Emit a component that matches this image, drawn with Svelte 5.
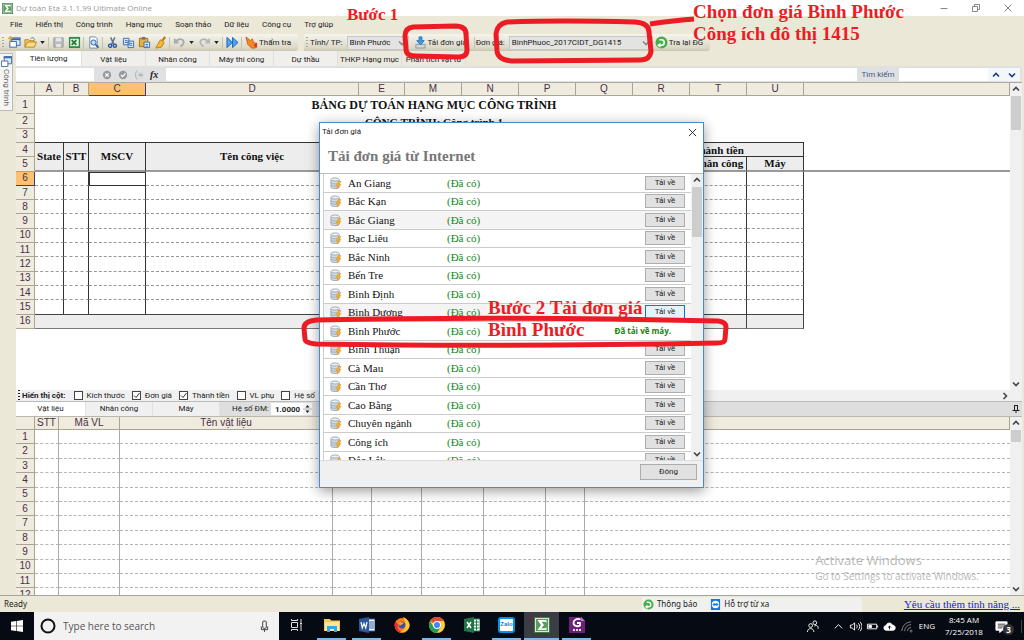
<script lang="ts">
  const menus = ['File', 'Hiển thị', 'Công trình', 'Hạng mục', 'Soạn thảo', 'Dữ liệu', 'Công cụ', 'Trợ giúp'];
  const sheetTabs = ['Tiên lượng', 'Vật liệu', 'Nhân công', 'Máy thi công', 'Dự thầu', 'THKP Hạng mục', 'Phân tích vật tư'];
  const resourceTabs = ['Vật liệu', 'Nhân công', 'Máy'];

  const columns = [
    { name: 'A', width: 29 },
    { name: 'B', width: 25 },
    { name: 'C', width: 57 },
    { name: 'D', width: 213 },
    { name: 'E', width: 46 },
    { name: 'M', width: 57 },
    { name: 'N', width: 57 },
    { name: 'P', width: 57 },
    { name: 'Q', width: 57 },
    { name: 'R', width: 57 },
    { name: 'T', width: 57 },
    { name: 'U', width: 57 }
  ];

  const resourceColumns = [
    { name: 'STT', width: 24 },
    { name: 'Mã VL', width: 61 },
    { name: 'Tên vật liệu', width: 213 },
    { name: '', width: 39 },
    { name: '', width: 50 },
    { name: '', width: 62 },
    { name: '', width: 62 },
    { name: '', width: 39 }
  ];

  const bodyRows = [6, 7, 8, 9, 10, 11, 12, 13, 14, 15];
  const resourceRows = Array.from({ length: 12 }, (_, i) => i + 1);

  const provinces = [
    'An Giang', 'Bắc Kạn', 'Bắc Giang', 'Bạc Liêu', 'Bắc Ninh', 'Bến Tre', 'Bình Định', 'Bình Dương',
    'Bình Phước', 'Bình Thuận', 'Cà Mau', 'Cần Thơ', 'Cao Bằng', 'Chuyên ngành', 'Công ích', 'Đắc Lắk'
  ];
  const downloaded = 'Bình Phước';
  const focused = 'Bình Dương';
  const shaded = ['Bắc Giang', 'Bình Dương'];

  let shownColumns = $state([
    { label: 'Kích thước', checked: false },
    { label: 'Đơn giá', checked: true },
    { label: 'Thành tiền', checked: true },
    { label: 'VL phụ', checked: false },
    { label: 'Hệ số', checked: false }
  ]);
  let factor = $state('1.0000');
  let activeTab = $state('Tiên lượng');
  let activeResource = $state('Vật liệu');
</script>

{#snippet sigma()}
  <svg viewBox="0 0 16 16" aria-hidden="true">
    <rect width="16" height="16" fill="#3c7d45" />
    <rect x="1.5" y="1.5" width="13" height="13" fill="#5b9a60" stroke="#dcebd9" />
    <path d="M3.5 3h9v3l-1-1.200H7.500L10 8l-2.800 3.200H11.500l1-1.200v3h-9l3.500-5z" fill="#fff" />
  </svg>
{/snippet}

{#snippet chevron(dir)}
  <svg class="chevron {dir}" viewBox="0 0 8 8" aria-hidden="true">
    <path d="M1 2.500 4 5.500 7 2.500" fill="none" stroke="currentColor" stroke-width="1.600" />
  </svg>
{/snippet}

{#snippet caret()}
  <svg class="caret" viewBox="0 0 6 4" aria-hidden="true"><path d="M0 0h6L3 4z" fill="#222" /></svg>
{/snippet}

{#snippet goIcon()}
  <svg viewBox="0 0 12 12" aria-hidden="true">
    <circle cx="6" cy="6" r="5.500" fill="#43b049" />
    <path d="M4 3.500h2a2.500 2.500 0 0 1 0 5H3.500" fill="none" stroke="#fff" stroke-width="1.500" />
    <path d="M5 6.200v4.600L2 8.500z" fill="#fff" />
  </svg>
{/snippet}

<div class="desktop">
  <header class="titlebar">
    <span class="app-icon">{@render sigma()}</span>
    <span class="title">Dự toán Eta 3.1.1.99 Ultimate Online</span>
    <div class="window-buttons">
      <button aria-label="Minimize"><svg viewBox="0 0 10 10"><path d="M1.500 5.500h7" /></svg></button>
      <button aria-label="Restore"><svg viewBox="0 0 10 10"><path d="M1.500 3.500h5v5h-5zM3.500 3.500v-2h5v5h-2" /></svg></button>
      <button aria-label="Close"><svg viewBox="0 0 10 10"><path d="m1.500 1.500 7 7m0-7-7 7" /></svg></button>
    </div>
  </header>

  <nav class="menubar">
    {#each menus as menu (menu)}
      <button>{menu}</button>
    {/each}
  </nav>

  <div class="toolbars">
    <div class="toolbar">
      <span class="grip"></span>
      <button class="tool" aria-label="New">
        <svg viewBox="0 0 14 14"><rect x="4" y="2" width="9" height="8" fill="#dcebfa" stroke="#3567a8" /><path d="M4 3.500h9" stroke="#3567a8" stroke-width="2" /><rect x="2" y="6" width="7" height="6" fill="#fff" stroke="#3567a8" /><path d="M2.500 0v6M0 2.500h5" stroke="#f0a020" stroke-width="1.500" /></svg>
      </button>
      <button class="tool" aria-label="Open">
        <svg viewBox="0 0 14 14"><path d="M1 12V4h4l1 1h5v2" fill="#f4c55c" stroke="#b98320" /><path d="m1 12 3-5.500h9.500L11 12z" fill="#ffe08a" stroke="#b98320" /><path d="M7 3c2-2 4-1 4.500 1" fill="none" stroke="#4876b5" /></svg>
      </button>
      {@render caret()}
      <span class="sep"></span>
      <button class="tool" aria-label="Save" disabled>
        <svg viewBox="0 0 14 14"><path d="M2 2h10v10H2z" fill="#bbb" stroke="#999" /><path d="M4 2h6v4H4zM4.500 8.500h5V12h-5z" fill="#e5e5e5" /></svg>
      </button>
      <button class="tool" aria-label="Excel">
        <svg viewBox="0 0 14 14"><rect x="1" y="1" width="12" height="12" fill="#2f8a46" /><rect x="2.500" y="3" width="9" height="8" fill="#e8f5e8" /><path d="m4 4.500 5 5m0-5-5 5" stroke="#23793a" stroke-width="2" /></svg>
      </button>
      <span class="sep"></span>
      <button class="tool" aria-label="Preview">
        <svg viewBox="0 0 14 14"><path d="M3 1h6l2 2v10H3z" fill="#fff" stroke="#6886b4" /><circle cx="7" cy="7" r="2.800" fill="#b9dcf5" stroke="#345f93" /><path d="m9 9 3.500 3.500" stroke="#345f93" stroke-width="1.600" /></svg>
      </button>
      <span class="sep"></span>
      <button class="tool" aria-label="Cut">
        <svg viewBox="0 0 14 14"><path d="M5 1.500 8.500 9M9.500 1.500 6 9" stroke="#5a7094" stroke-width="1.500" /><circle cx="4.500" cy="10.500" r="1.700" fill="none" stroke="#1e50a8" stroke-width="1.500" /><circle cx="9.500" cy="10.500" r="1.700" fill="none" stroke="#1e50a8" stroke-width="1.500" /></svg>
      </button>
      <button class="tool" aria-label="Copy">
        <svg viewBox="0 0 14 14"><path d="M1.500 2.500h6v7h-6zM6.500 5.500h6v7h-6z" fill="#d9e8fb" stroke="#3769b3" /><path d="M3 5h3M3 7h3M8 8h3M8 10h3" stroke="#3769b3" /></svg>
      </button>
      <button class="tool" aria-label="Paste">
        <svg viewBox="0 0 14 14"><path d="M1.500 2.500h9v9h-9z" fill="#e8b13c" stroke="#9b6f18" /><path d="M4 1h4v3H4z" fill="#777" /><path d="M6.500 6.500h6v6h-6z" fill="#e3eefb" stroke="#3769b3" /><path d="M8 9h3M8 11h3" stroke="#3769b3" /></svg>
      </button>
      <button class="tool" aria-label="Format painter">
        <svg viewBox="0 0 14 14"><path d="m12 1-3 4" stroke="#bd7b1b" stroke-width="2.500" /><path d="m7 4 4 3-3 5-6 1 2-4z" fill="#f7b733" stroke="#bd7b1b" /></svg>
      </button>
      <span class="sep"></span>
      <button class="tool" aria-label="Undo" disabled>
        <svg viewBox="0 0 14 14"><path d="M2 3v4h4M2.500 6.500C5 3 9 2.500 11 5s-1 5-3 6.500" fill="none" stroke="#aaa" stroke-width="2" /></svg>
      </button>
      {@render caret()}
      <button class="tool" aria-label="Redo" disabled>
        <svg viewBox="0 0 14 14"><path d="M12 3v4H8M11.500 6.500C9 3 5 2.500 3 5s1 5 3 6.500" fill="none" stroke="#b5b5b5" stroke-width="2" /></svg>
      </button>
      {@render caret()}
      <span class="sep"></span>
      <button class="tool" aria-label="Run">
        <svg viewBox="0 0 14 14"><path d="m1 1.500 6 5.500-6 5.500zM7 1.500 13 7l-6 5.500z" fill="#4aa3ee" stroke="#1e63bd" /></svg>
      </button>
      <span class="sep"></span>
      <button class="labelled">
        <svg viewBox="0 0 14 14"><path d="m1 1 5 4 2-2 1 4 3 1-1 5H7l-4-4z" fill="#f08a24" stroke="#d4551c" /><path d="m9 10 4-3v6z" fill="#d33" /></svg>
        Thẩm tra
      </button>
    </div>

    <div class="toolbar">
      <span class="grip"></span>
      <label for="province">Tỉnh/ TP:</label>
      <span class="dropdown">
        <select id="province" class="province"><option>Bình Phước</option></select>
        {@render chevron('down')}
      </span>
      <button class="labelled download">
        <svg viewBox="0 0 14 14"><path d="M2 9h10v4H2z" fill="#cfd5da" stroke="#8c969e" /><path d="M5.500 1h3v4H11L7 9.500 3 5h2.500z" fill="#3f9be4" stroke="#2472b8" /></svg>
        Tải đơn giá
      </button>
      <span class="sep"></span>
      <label for="price">Đơn giá:</label>
      <span class="dropdown">
        <select id="price" class="price"><option>BinhPhuoc_2017CIDT_DG1415</option></select>
        {@render chevron('down')}
      </span>
      <button class="labelled">{@render goIcon()} Tra lại ĐG</button>
    </div>
  </div>

  <div class="workspace">
    <aside>
      <button class="side-tab">
        <svg viewBox="0 0 12 12"><path d="M3.500.500h8v8h-8z" fill="#dbe9fa" stroke="#416da8" /><path d="M3 1.500h9" stroke="#416da8" stroke-width="2" /><path d="M.500 5.500h7v6h-7z" fill="#fff" stroke="#416da8" /></svg>
        <span>Công trình</span>
      </button>
    </aside>

    <main>
      <div class="tabs">
        {#each sheetTabs as tab (tab)}
          <button class:active={tab === activeTab} onclick={() => (activeTab = tab)}>{tab}</button>
        {/each}
      </div>

      <div class="formula-bar">
        <input class="cell-name" aria-label="Ô" />
        <div class="formula-tools">
          <svg viewBox="0 0 12 12"><circle cx="6" cy="6" r="5" fill="#999" /><path d="m4 4 4 4m0-4-4 4" stroke="#fff" stroke-width="1.500" /></svg>
          <svg viewBox="0 0 12 12"><circle cx="6" cy="6" r="5" fill="#999" /><path d="m3.500 6 2 2 3.500-4" fill="none" stroke="#fff" stroke-width="1.500" /></svg>
          <svg viewBox="0 0 12 12"><path d="M4 .500a8 8 0 0 0 0 11" fill="none" stroke="#aaa" /><circle cx="8" cy="6" r="3.500" fill="#d5d5d5" /><path d="M6 6h4" stroke="#888" /></svg>
          <i>fx</i>
        </div>
        <input class="formula" aria-label="Công thức" />
        <label for="find">Tìm kiếm</label>
        <input id="find" class="find" />
        <button aria-label="Tìm trước">{@render chevron('up')}</button>
        <button aria-label="Tìm sau">{@render chevron('down')}</button>
      </div>

      <section class="pane upper">
        <div class="sheet">
          <table class="estimate">
            <colgroup>
              <col class="gutter" />
              {#each columns as column (column.name)}
                <col style="width: {column.width}px" />
              {/each}
              <col />
            </colgroup>
            <thead>
              <tr>
                <th></th>
                {#each columns as column (column.name)}
                  <th class:selected={column.name === 'C'}>{column.name}</th>
                {/each}
                <th></th>
              </tr>
            </thead>
            <tbody>
              <tr class="first">
                <th>1</th>
                <td></td>
                <td class="heading" colspan="11">BẢNG DỰ TOÁN HẠNG MỤC CÔNG TRÌNH</td>
                <td></td>
              </tr>
              <tr>
                <th>2</th>
                <td></td>
                <td colspan="11">CÔNG TRÌNH: Công trình 1</td>
                <td></td>
              </tr>
              <tr class="above-head"><th>3</th><td colspan="12"></td><td class="filler"></td></tr>
              <tr class="head">
                <th>4</th>
                <td class="frozen" rowspan="2">State</td>
                <td class="frozen" rowspan="2">STT</td>
                <td class="frozen" rowspan="2">MSCV</td>
                <td class="frozen" rowspan="2">Tên công việc</td>
                <td class="frozen" rowspan="2"></td>
                <td class="frozen" rowspan="2"></td>
                <td colspan="3"></td>
                <td colspan="3">Thành tiền</td>
                <td class="filler"></td>
              </tr>
              <tr class="head">
                <th>5</th>
                {#each ['', '', '', '', 'Nhân công', 'Máy'] as name}
                  <td class="frozen">{name}</td>
                {/each}
                <td class="filler frozen"></td>
              </tr>
              {#each bodyRows as row (row)}
                <tr class="line" class:last={row === 15}>
                  <th class:selected={row === 6}>{row}</th>
                  {#each columns as column (column.name)}
                    <td class:cursor={row === 6 && column.name === 'C'}></td>
                  {/each}
                  <td class="filler"></td>
                </tr>
              {/each}
              <tr class="total">
                <th>16</th>
                <td colspan="10"></td>
                <td></td>
                <td></td>
                <td class="filler"></td>
              </tr>
            </tbody>
          </table>
        </div>
        <div class="scrollbar tall">
          {@render chevron('up')}
          <span class="thumb"></span>
          {@render chevron('down')}
        </div>
      </section>

      <div class="column-options">
        <span class="grip dark"></span>
        <b>Hiển thị cột:</b>
        {#each shownColumns as option (option.label)}
          <label>
            <span class="tick">
              <input type="checkbox" bind:checked={option.checked} />
              {#if option.checked}
                <svg viewBox="0 0 9 9" aria-hidden="true"><path d="m2 4.500 2 2 3.500-4.500" fill="none" stroke="#333" /></svg>
              {/if}
            </span>
            {option.label}
          </label>
        {/each}
        <span class="scroll-right">{@render chevron('right')}</span>
      </div>

      <div class="resource-bar">
        {#each resourceTabs as tab (tab)}
          <button class:active={tab === activeResource} onclick={() => (activeResource = tab)}>{tab}</button>
        {/each}
        <label for="factor">Hệ số ĐM:</label>
        <input id="factor" bind:value={factor} />
        <span class="spinner">
          <svg viewBox="0 0 9 12" aria-hidden="true"><path d="M2.500 4.500h4l-2-2.500zM2.500 7.500h4l-2 2.500z" fill="#222" /><path d="M0 6h9" stroke="#bbb" /></svg>
        </span>
        <svg class="pin" viewBox="0 0 8 8" aria-hidden="true"><path d="M2.500 0v5M5.500 0v5M2 .500h4M.500 5.500h7M4 5v3" fill="none" stroke="#222" /></svg>
      </div>

      <section class="pane lower">
        <div class="sheet">
          <table class="resources">
            <colgroup>
              <col class="gutter" />
              {#each resourceColumns as column}
                <col style="width: {column.width}px" />
              {/each}
              <col />
            </colgroup>
            <thead>
              <tr>
                <th></th>
                {#each resourceColumns as column, i}
                  <th class:blank={i > 2}>{column.name}</th>
                {/each}
                <th></th>
              </tr>
            </thead>
            <tbody>
              {#each resourceRows as row (row)}
                <tr>
                  <th>{row}</th>
                  {#each resourceColumns as _}
                    <td></td>
                  {/each}
                  <td class="filler"></td>
                </tr>
              {/each}
            </tbody>
          </table>
        </div>
        <div class="scrollbar short">
          {@render chevron('up')}
          <span class="thumb"></span>
          {@render chevron('down')}
        </div>
        <div class="watermark">
          <p>Activate Windows</p>
          <small>Go to Settings to activate Windows.</small>
        </div>
      </section>
    </main>
  </div>

  <footer class="statusbar">
    <span class="ready">Ready</span>
    <div class="status-links">
      <button>{@render goIcon()} Thông báo</button>
      <button>
        <svg viewBox="0 0 12 12"><rect x="1" width="10" height="12" fill="#1976d8" /><circle cx="6" cy="6" r="4" fill="#fff" /><path d="m2.500 6 2.500-2v1.200h2V4l2.500 2L7 8V6.800H5V8z" fill="#1976d8" /></svg>
        Hỗ trợ từ xa
      </button>
    </div>
    <a href="#feature">Yêu cầu thêm tính năng ...</a>
  </footer>

  <div class="taskbar">
    <button class="start" aria-label="Start">
      <svg viewBox="0 0 12 12"><path d="m0 1.800 5-.700v4.600H0zM5.600 1 12 0v5.700H5.600zM0 6.300h5v4.600l-5-.700zM5.600 6.300H12V12l-6.400-1z" fill="#fff" /></svg>
    </button>
    <div class="search">
      <svg class="cortana" viewBox="0 0 16 16"><circle cx="8" cy="8" r="6.500" fill="none" stroke="#111" stroke-width="2" /></svg>
      <input placeholder="Type here to search" aria-label="Type here to search" />
      <svg class="mic" viewBox="0 0 10 14"><rect x="3" y="1" width="4" height="8" rx="1" fill="none" stroke="#333" /><path d="M1.500 7v3.500h7V7M5 10.500V13" fill="none" stroke="#333" /></svg>
    </div>
    <button class="app" aria-label="Task view">
      <svg viewBox="0 0 16 16"><path d="M2.500 5.500h6v5h-6zM2.500 3.500V2M8.500 3.500V2M2.500 3.500h6M2.500 12.500h6M2.500 12.500V14M8.500 12.500V14M12 2v3M12 8v6" fill="none" stroke="#ddd" /><path d="M11 5.500h2v2h-2z" fill="#ddd" /></svg>
    </button>
    <button class="app running" aria-label="Explorer">
      <svg viewBox="0 0 16 16"><path d="M0 2h6l1 1.500h9V14H0z" fill="#f5c85a" /><path d="M1 5h14v9H1z" fill="#ffe49a" /><path d="M3 15V9h10v6h-3v-3H6v3z" fill="#38a6e0" /></svg>
    </button>
    <button class="app running" aria-label="Word">
      <svg viewBox="0 0 16 16"><path d="M8 2h8v12H8z" fill="#fff" stroke="#2b579a" /><path d="M10 5h5M10 7h5M10 9h5M10 11h5" stroke="#2b579a" /><path d="m0 2 10-2v16L0 14z" fill="#2b579a" /><path d="m2 5 1.300 6L5 6.500 6.700 11 8 5" fill="none" stroke="#fff" stroke-width="1.200" /></svg>
    </button>
    <button class="app" aria-label="Firefox">
      <svg viewBox="0 0 16 16"><circle cx="8" cy="8.500" r="7.500" fill="#ff7a18" /><path d="M9 0c5 2 7 6 6.500 9-1 5-6 7-10 6C12 14 13 7 9 0z" fill="#ffc928" /><path d="M1 5c-1 6 2 10.500 7 10.500C4 13 3 10 4 7z" fill="#e8263c" /><circle cx="8" cy="8" r="3.400" fill="#3c4bb8" /><path d="M4 6c3-2 4 0 6-.500C9 8 7 7 6 9z" fill="#ff9a20" /></svg>
    </button>
    <button class="app running" aria-label="Chrome">
      <svg viewBox="0 0 16 16"><circle cx="8" cy="8" r="8" fill="#ffcd40" /><path d="M8 8 1.100 4A8 8 0 0 1 15 4H8z" fill="#e04a3a" /><path d="M1.100 4A8 8 0 0 0 8 16l3.500-6L8 8 4.500 10z" fill="#1fa05a" /><circle cx="8" cy="8" r="3.900" fill="#fff" /><circle cx="8" cy="8" r="3" fill="#4285f4" /></svg>
    </button>
    <button class="app" aria-label="Excel">
      <svg viewBox="0 0 16 16"><path d="M8 2h8v12H8z" fill="#fff" stroke="#217346" /><path d="M10 5h5M10 8h5M10 11h5M12.500 3v10" stroke="#217346" /><path d="m0 2 10-2v16L0 14z" fill="#217346" /><path d="m3 5 4 6m0-6-4 6" stroke="#fff" stroke-width="1.500" /></svg>
    </button>
    <button class="app running" aria-label="Zalo">
      <span class="zalo">Zalo</span>
    </button>
    <button class="app running current" aria-label="Eta">{@render sigma()}</button>
    <button class="app running" aria-label="Foxit PDF">
      <svg viewBox="0 0 16 16"><path d="M0 0h12l4 4v12H0z" fill="#6d2077" /><path d="M12 0v4h4z" fill="#b77fc0" /><path d="M11.500 2.500C8 1 4.500 3 4.500 6s4 4 6.500 2.500V6H8" fill="none" stroke="#fff" stroke-width="1.800" /><path d="M4 13h2M7 13h2M10 13h2" stroke="#ddd" stroke-width="2" /></svg>
    </button>

    <div class="tray">
      <svg viewBox="0 0 14 14"><circle cx="5" cy="6" r="2" /><path d="M1.500 13c0-5 7-5 7 0" /><circle cx="9.500" cy="3" r="2" /><path d="M9 6.500c2.500-1.500 4.500 0 4 3" /></svg>
      <svg viewBox="0 0 14 14"><path d="m3 9 4-4 4 4" /></svg>
      <svg viewBox="0 0 14 14"><path d="M1.500 5.500h2l2.500-2.500v8L3.500 8.500h-2zM8 5c1 1 1 3 0 4M10 3.500c2 2 2 5 0 7M12 2c2.500 3 2.500 7 0 10" /></svg>
      <svg viewBox="0 0 14 14"><path d="M1.500 4.500h10v5h-10zM12.500 6v2" /><path d="M3 6h3v2H3z" fill="#fff" /></svg>
      <svg viewBox="0 0 14 14"><path d="M3.500 11a2.500 2.500 0 0 1 0-5c.500-3.500 5.500-3.500 6.500-.500 4 0 4 5.500 1 5.500z" fill="#fff" /><path d="M7 10V6.500M5.500 8 7 6.500 8.500 8" stroke="#090d14" /></svg>
      <svg viewBox="0 0 14 14" class="dim"><path d="M2 12A10 10 0 0 1 12 2M5 12a7 7 0 0 1 7-7M8 12a4 4 0 0 1 4-4" /><circle cx="12" cy="12" r="1" /></svg>
      <span class="lang">ENG</span>
      <time><span>8:45 AM</span><span>7/25/2018</span></time>
      <div class="notifications">
        <svg viewBox="0 0 14 14"><path d="M1 2h12v9H8l-3 2.500V11H1z" fill="#fff" /><path d="M3 4.500h8M3 6.500h8M3 8.500h5" stroke="#333" /></svg>
        <b>3</b>
      </div>
    </div>
  </div>

  <div class="dialog" role="dialog" aria-labelledby="dialog-title">
    <div class="dialog-title">
      <span id="dialog-title">Tải đơn giá</span>
      <button aria-label="Đóng cửa sổ"><svg viewBox="0 0 10 10"><path d="m1 1 8 8m0-8-8 8" stroke="#222" /></svg></button>
    </div>
    <h2>Tải đơn giá từ Internet</h2>
    <div class="dialog-body">
      <ul>
        {#each provinces as province (province)}
          <li class:shaded={shaded.includes(province)}>
            <svg viewBox="0 0 13 13" aria-hidden="true">
              <path d="M1 3v8c0 2 9 2 9 0V3z" fill="#d3dae0" stroke="#9aa7b3" />
              <path d="M1 6c0 2 9 2 9 0M1 8.500c0 2 9 2 9 0" fill="none" stroke="#9aa7b3" />
              <ellipse cx="5.500" cy="2.700" rx="4.500" ry="1.700" fill="#eef2f5" stroke="#9aa7b3" />
              <path d="M9 5 6.500 9.500h2L7.500 13l4.500-5h-2.200L12 5z" fill="#f8b230" stroke="#d88e1b" stroke-width=".500" />
            </svg>
            <span class="name">{province}</span>
            <span class="have">(Đã có)</span>
            {#if province === downloaded}
              <strong>Đã tải về máy.</strong>
            {:else}
              <button class:focused={province === focused}>Tải về</button>
            {/if}
          </li>
        {/each}
      </ul>
      <div class="scrollbar list">
        {@render chevron('up')}
        <span class="thumb"></span>
        {@render chevron('down')}
      </div>
    </div>
    <div class="dialog-footer"><button>Đóng</button></div>
  </div>

  <svg class="marks" width="1024" height="640" aria-hidden="true">
    <path d="M413 27 455 26Q466 26 466 34L467 50Q467 57 458 57L416 56Q406 56 406 49L405 36Q405 28 413 27z" />
    <path d="M507 22Q560 20 635 22Q649 23 649 32L651 51Q650 60 640 60L512 61Q498 60 497 51L496 34Q497 24 507 22z" />
    <path d="M650 24Q670 21 694 19" />
    <path d="M317 320Q500 316 718 321Q726 322 726 327L725 339Q725 343 717 343Q500 347 316 344Q305 343 305 339L304 328Q304 321 317 320z" />
  </svg>
  <p class="note step-one">Bước 1</p>
  <p class="note choose">Chọn đơn giá Bình Phước<br />Công ích đô thị 1415</p>
  <p class="note step-two">Bước 2 Tải đơn giá<br />Bình Phước</p>
</div>

<style>
  :global(body) { margin: 0; }

  .desktop {
    position: relative;
    display: flex;
    flex-direction: column;
    height: 100vh;
    overflow: hidden;
    background: #ebe8d8;
    color: #222;
    font: 8px/10px Roboto, Arial, sans-serif;
  }

  button, input, select {
    margin: 0;
    padding: 0;
    border: 0;
    border-radius: 0;
    background: none;
    color: inherit;
    font: inherit;
    box-sizing: border-box;
  }
  button { white-space: nowrap; }
  input { min-width: 0; background: #fff; outline: none; }
  label { white-space: nowrap; }
  svg { display: block; flex: none; }

  .chevron { width: 8px; height: 8px; color: #444; }
  .chevron.up { transform: rotate(180deg); }
  .chevron.right { transform: rotate(-90deg); }
  .caret { width: 5px; height: 3px; margin: 0 2px; }

  /* Window chrome */
  .titlebar {
    flex: none;
    display: flex;
    align-items: center;
    height: 16px;
    padding-left: 2px;
    background: #fff;
  }
  .app-icon svg { width: 11px; height: 11px; }
  .title {
    flex: 1;
    margin-left: 3px;
    color: #999;
    font: 8px/12px "Open Sans", sans-serif;
  }
  .window-buttons { display: flex; }
  .window-buttons button { width: 32px; display: flex; justify-content: center; }
  .window-buttons svg { width: 10px; height: 10px; fill: none; stroke: #888; }

  .menubar {
    flex: none;
    display: flex;
    gap: 13px;
    height: 18px;
    padding-left: 10px;
  }

  .toolbars {
    flex: none;
    display: flex;
    gap: 6px;
    height: 17px;
  }
  .toolbar {
    display: flex;
    align-items: center;
    padding-right: 5px;
    border-radius: 0 3px 3px 0;
    background: linear-gradient(#f6f5ee, #dcd9c8 80%, #c9c6b2);
  }
  .grip {
    width: 2px;
    height: 11px;
    margin: 0 2px;
    background: repeating-linear-gradient(#aaa79a 0 1px, transparent 1px 3px);
  }
  .grip.dark { background: repeating-linear-gradient(#223 0 1px, transparent 1px 3px); }
  .sep { width: 1px; height: 12px; margin: 0 1px; background: #c5c2b2; }
  .tool { width: 16px; display: flex; justify-content: center; }
  .tool svg, .labelled svg { width: 13px; height: 13px; }
  .labelled { display: flex; align-items: center; gap: 1px; padding: 0 2px; }
  .labelled.download { padding: 0 6px 0 5px; }

  .dropdown { position: relative; display: flex; margin-left: 4px; }
  .dropdown .chevron { position: absolute; right: 3px; top: 3px; color: #888; pointer-events: none; }
  select {
    height: 14px;
    padding-left: 2px;
    border: 1px solid #c8c8c4;
    background: #e3e3e1;
    appearance: none;
  }
  .province { width: 62px; }
  .price { width: 144px; }

  .workspace { flex: 1; display: flex; min-height: 0; }
  aside { flex: none; width: 16px; }
  .side-tab {
    display: flex;
    flex-direction: column;
    align-items: center;
    gap: 2px;
    width: 13px;
    margin-top: 2px;
    padding: 2px 0 4px;
    border: 1px solid #b8bcc2;
    border-left: 0;
    background: #f5f5f3;
    color: #666;
  }
  .side-tab svg { width: 11px; height: 11px; }
  .side-tab span { writing-mode: vertical-rl; }

  main { flex: 1; display: flex; flex-direction: column; min-width: 0; padding-right: 2px; }

  .tabs { flex: none; display: flex; height: 15px; }
  .tabs button { width: 64px; border-right: 1px solid #dfdfdb; background: #f0efec; padding-top: 2px; }
  .tabs button.active { width: 66px; background: #fff; padding: 0; }
  .tabs button:nth-last-child(-n + 2) { background: #ebe9de; }

  .formula-bar {
    flex: none;
    display: flex;
    align-items: stretch;
    height: 17px;
    box-sizing: border-box;
    padding: 2px 2px 1px 0;
    border-bottom: 1px solid #b0ada0;
    background: #dfe0e2;
  }
  .cell-name { width: 78px; }
  .formula-tools { display: flex; align-items: center; gap: 6px; width: 72px; padding-left: 8px; box-sizing: border-box; }
  .formula-tools svg { width: 10px; height: 10px; }
  .formula-tools i { color: #222; font: italic bold 10px/12px "Liberation Serif", serif; }
  .formula { flex: 1; }
  .formula-bar label { width: 42px; color: #44577c; line-height: 14px; text-align: center; }
  .find { width: 89px; }
  .formula-bar button { width: 16px; display: flex; align-items: center; justify-content: center; background: #f3f6fb; }
  .formula-bar .chevron { color: #1d3c78; }

  /* Sheets */
  .pane { position: relative; display: flex; min-height: 0; background: #fff; }
  .upper { flex: 307 1 0; }
  .lower { flex: 178 1 0; overflow: hidden; }
  .sheet { flex: 1; min-width: 0; overflow: hidden; }

  table { width: 100%; table-layout: fixed; border-collapse: separate; border-spacing: 0; }
  .estimate { height: 246px; }
  .resources { height: 186px; }
  .gutter { width: 19px; }
  th, td { padding: 0; box-sizing: border-box; overflow: hidden; white-space: nowrap; }
  th {
    border-right: 1px solid #a9a592;
    border-bottom: 1px solid #a9a592;
    background: #efebde;
    color: #483048;
    font: 10px/12px "Liberation Sans", Arial, sans-serif;
  }
  th.selected { background: #ffc070; border-color: #3a3a88; }
  thead th.blank { border-right-color: #efebde; }
  tbody tr { height: 14px; }
  tr.first { height: 18px; }
  td { color: #111; font: bold 11px/12px "Liberation Serif", "Times New Roman", serif; text-align: center; }
  .heading { font-size: 12px; }

  .above-head td:not(.filler) { border-bottom: 1px solid #333; }
  .head td:not(.filler) {
    border-right: 1px solid #333;
    border-bottom: 1px solid #333;
    background: #ededed;
  }
  .head td.frozen, .head td.filler.frozen { border-bottom: 2px solid #999; }
  .line td:not(.filler) { border-right: 1px solid #333; border-bottom: 1px dashed #999; }
  .line.last td:not(.filler) { border-bottom: 1px solid #444; }
  .line td.cursor { outline: 1px solid #333; outline-offset: -1px; }
  .total td:not(.filler) { border-right: 1px solid #444; border-bottom: 1px solid #777; background: #ededed; }
  .resources td { border-right: 1px solid #aaa; border-bottom: 1px dashed #b5b5b5; }
  .resources td.filler { border-right: 0; }

  .scrollbar {
    flex: none;
    display: flex;
    flex-direction: column;
    align-items: center;
    width: 12px;
    padding: 2px 0;
    box-sizing: border-box;
    background: #f0f0f0;
  }
  .scrollbar .thumb { width: 10px; margin: 3px 0 auto; background: #cdcdcd; }
  .tall .thumb { height: 34px; }
  .short .thumb { height: 12px; }
  .list .thumb { height: 50px; }

  .column-options {
    flex: none;
    display: flex;
    align-items: center;
    height: 12px;
    background: #f0f0f0;
    border-bottom: 1px solid #bbb;
    box-sizing: border-box;
  }
  .column-options b { margin-right: 1px; }
  .column-options label { display: flex; align-items: center; gap: 4px; margin-left: 7px; }
  .tick { position: relative; display: flex; }
  .tick input {
    width: 9px;
    height: 9px;
    border: 1px solid #444;
    background: #fff;
    appearance: none;
  }
  .tick svg { position: absolute; left: 0; top: 0; width: 9px; height: 9px; pointer-events: none; }
  .scroll-right { margin: 0 13px 0 auto; }

  .resource-bar {
    flex: none;
    display: flex;
    align-items: center;
    height: 15px;
    box-sizing: border-box;
    border-bottom: 1px solid #b8b8ac;
    background: #dedede;
  }
  .resource-bar button { width: 67px; height: 14px; border-right: 1px solid #e2e2e2; background: #f0f0f0; }
  .resource-bar button.active { width: 70px; background: #fff; }
  .resource-bar label { margin: 0 2px 0 12px; }
  .resource-bar input { width: 32px; height: 12px; padding-left: 4px; font-weight: bold; }
  .spinner svg { width: 9px; height: 12px; background: #f4f4f4; }
  .pin { width: 8px; height: 8px; margin: 0 2px 0 auto; }

  .watermark {
    position: absolute;
    right: 43px;
    bottom: 12px;
    color: #b9b9b9;
    font-family: "Open Sans", sans-serif;
  }
  .watermark p { margin: 0; font-size: 13px; line-height: 17px; }
  .watermark small { display: block; font-size: 10px; line-height: 14px; }

  .statusbar {
    flex: none;
    display: flex;
    align-items: center;
    height: 17px;
    box-sizing: border-box;
    padding: 0 4px;
    border-top: 1px solid #a5a5a0;
    font: 8px/12px "Noto Sans", sans-serif;
  }
  .ready { flex: 1; }
  .status-links { display: flex; gap: 12px; width: 220px; height: 15px; margin-right: 42px; background: #f0f0ee; }
  .status-links button { display: flex; align-items: center; gap: 3px; }
  .status-links svg { width: 11px; height: 11px; margin-left: 1px; }
  .statusbar a { color: #1a1ae6; font: 11px/12px "Liberation Serif", serif; }

  /* Taskbar */
  .taskbar {
    flex: none;
    display: flex;
    height: 28px;
    background: #060a12;
    color: #fff;
    font-family: "Open Sans", sans-serif;
  }
  .start { width: 34px; display: flex; align-items: center; justify-content: center; }
  .start svg { width: 12px; height: 12px; }
  .search { display: flex; align-items: center; width: 245px; padding: 0 10px 0 6px; box-sizing: border-box; background: #f2f2f2; }
  .cortana { width: 16px; height: 16px; }
  .search input { flex: 1; padding-left: 7px; background: none; color: #555; font-size: 10px; line-height: 14px; }
  .search input::placeholder { color: #555; opacity: 1; }
  .mic { width: 9px; height: 13px; }
  .app { width: 35px; display: flex; align-items: center; justify-content: center; border-bottom: 2px solid transparent; }
  .app svg { width: 16px; height: 16px; }
  .app.running { width: 29px; margin: 0 3px; border-color: #76b9ed; }
  .app.current { width: 35px; margin: 0; background: #3a3d44; }
  .zalo {
    width: 17px;
    height: 16px;
    border: 2px solid #0a8fe8;
    border-radius: 3px;
    box-sizing: border-box;
    background: #fff;
    color: #0a7fd8;
    font: bold 6px/11px "Liberation Sans", sans-serif;
  }

  .tray { display: flex; align-items: center; gap: 4px; margin-left: auto; padding-right: 2px; }
  .tray svg { width: 13px; height: 13px; fill: none; stroke: #fff; }
  .tray > svg:first-child { margin-right: 9px; }
  .tray svg.dim { stroke: #888; }
  .lang { margin-left: 2px; }
  .tray time { display: flex; flex-direction: column; width: 46px; margin-left: 2px; line-height: 12px; text-align: center; }
  .notifications { position: relative; width: 26px; margin-left: 4px; border-right: 1px solid #444; }
  .notifications b {
    position: absolute;
    left: 8px;
    top: 4px;
    width: 11px;
    border-radius: 50%;
    background: #333;
    line-height: 11px;
    text-align: center;
  }

  /* Download dialog */
  .dialog {
    position: absolute;
    left: 319px;
    top: 122px;
    display: flex;
    flex-direction: column;
    width: 385px;
    height: 366px;
    box-sizing: border-box;
    border: 1px solid #3f8fd0;
    background: #fff;
    box-shadow: 0 3px 12px rgba(0, 0, 0, 0.4);
  }
  .dialog-title { display: flex; justify-content: space-between; align-items: center; height: 18px; padding: 0 6px 0 2px; }
  .dialog-title svg { width: 9px; height: 9px; }
  h2 {
    margin: 0;
    padding: 6px 0 8px 8px;
    border-bottom: 1px solid #bbb;
    color: #777;
    font: bold 15px/18px "Liberation Serif", serif;
  }
  .dialog-body { flex: 1; display: flex; min-height: 0; overflow: hidden; }
  ul {
    display: grid;
    grid-template-rows: repeat(16, 1fr);
    flex: 1;
    height: 296px;
    margin: 0 0 0 3px;
    padding: 0;
    border-left: 1px solid #ccc;
    list-style: none;
  }
  li {
    display: flex;
    align-items: center;
    padding: 0 6px;
    border-bottom: 1px solid #ccc;
    color: #111;
    font: 11px/14px "Liberation Serif", "Times New Roman", serif;
  }
  li.shaded { background: #f4f4f4; }
  li svg { width: 12px; height: 12px; }
  .name { width: 99px; margin-left: 6px; }
  .have { flex: 1; color: #138a1b; }
  li strong { margin-right: 14px; color: #118311; font: bold 8px/12px "Open Sans", sans-serif; }
  li button {
    width: 40px;
    height: 14px;
    border: 1px solid #adadad;
    background: #e1e1e1;
    color: #222;
    font: 8px/10px Roboto, Arial, sans-serif;
  }
  li button.focused { border-color: #0078d7; background: #e5f1fb; }
  .dialog-footer { padding: 3px 6px 7px; border-top: 1px solid #ddd; background: #f0f0f0; text-align: right; }
  .dialog-footer button { width: 57px; height: 16px; border: 1px solid #adadad; background: #e1e1e1; }

  /* Red pen notes on top of the windows */
  .marks { position: absolute; left: 0; top: 0; fill: none; stroke: #ed1c24; stroke-width: 5; pointer-events: none; }
  .note {
    position: absolute;
    margin: 0;
    color: #ed1c24;
    font: bold 19px/22px "Liberation Serif", "Times New Roman", serif;
    white-space: nowrap;
  }
  .step-one { left: 347px; top: 4px; font-size: 17px; }
  .choose { left: 693px; top: 1px; }
  .step-two { left: 488px; top: 297px; }
</style>
